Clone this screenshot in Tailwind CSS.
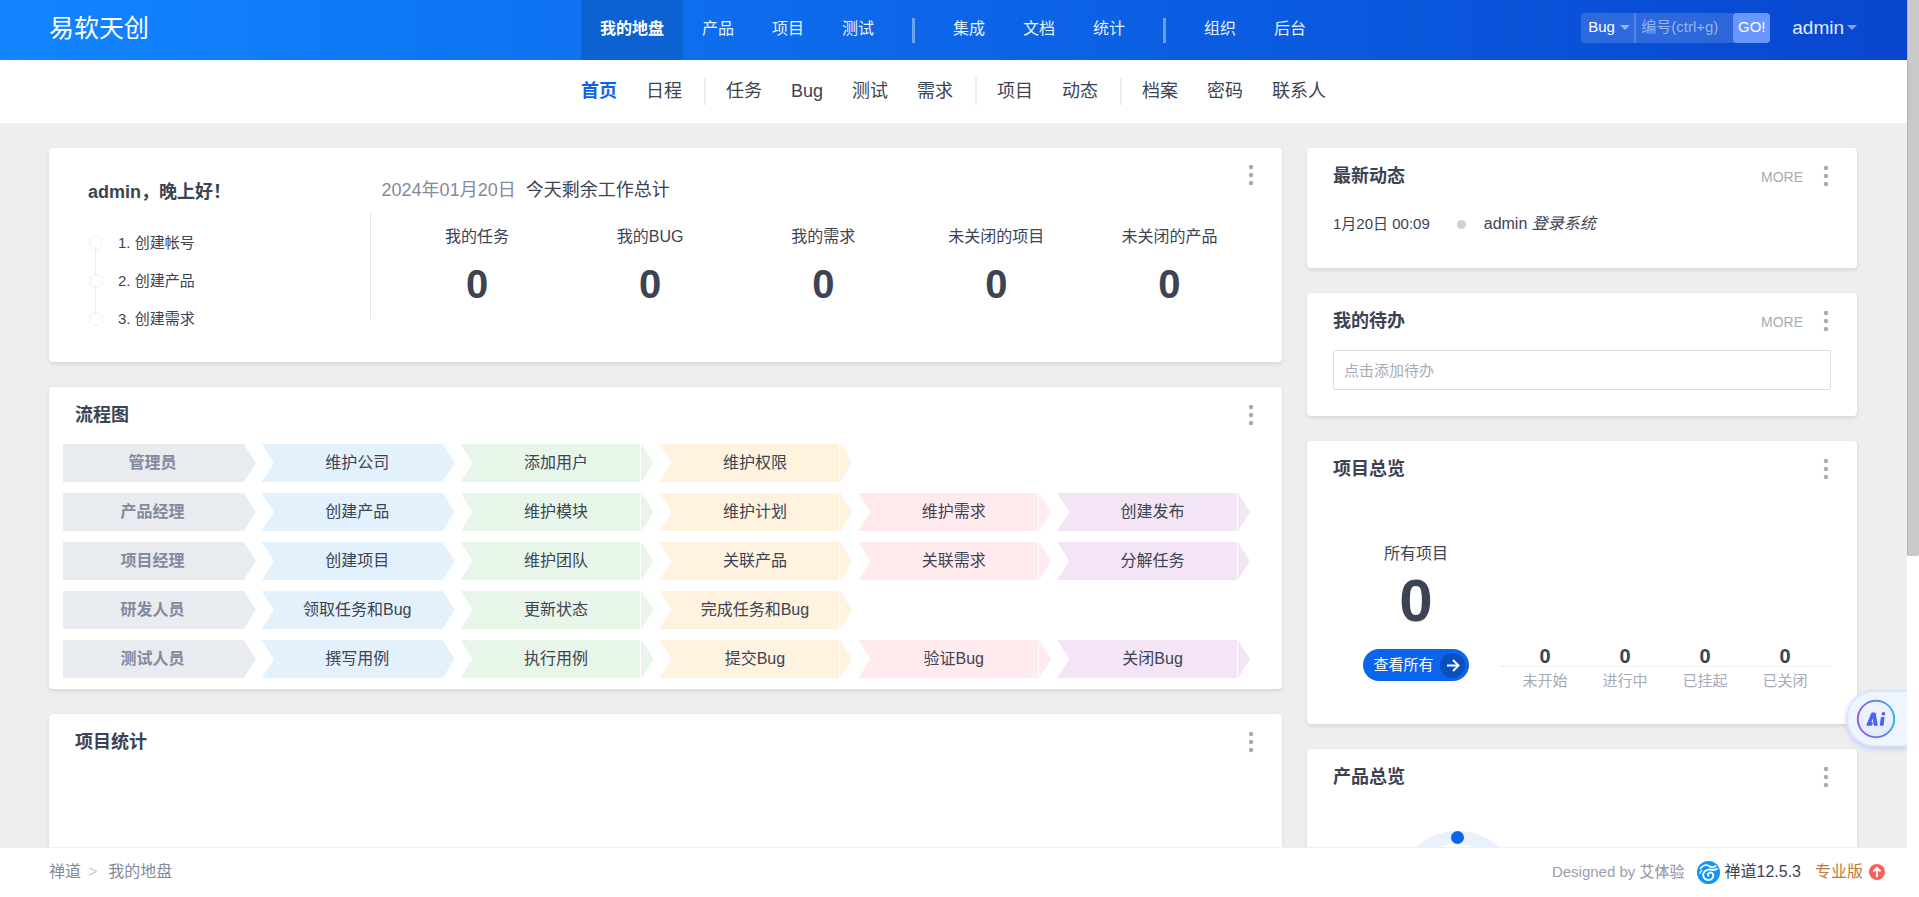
<!DOCTYPE html>
<html lang="zh-CN">
<head>
<meta charset="utf-8">
<meta name="viewport" content="width=device-width, initial-scale=1">
<title>我的地盘 - 禅道</title>
<script src="https://cdn.jsdelivr.net/npm/@tailwindcss/browser@4"></script>
</head>
<body class="flex h-screen overflow-hidden bg-white font-['Liberation_Sans','Noto_Sans_CJK_SC',sans-serif] text-base text-[#3c4353]">
<svg class="hidden">
  <symbol id="dots" viewBox="0 0 6 22"><g fill="#a6aab8"><circle cx="3" cy="3" r="2.2"/><circle cx="3" cy="11" r="2.2"/><circle cx="3" cy="19" r="2.2"/></g></symbol>
  <symbol id="caret" viewBox="0 0 10 5"><path d="M0 0h10L5 5z" fill="currentColor"/></symbol>
</svg>

<div class="relative flex min-w-0 flex-1 flex-col">
  <header class="grid h-[60px] shrink-0 grid-cols-[1fr_auto_1fr] items-center bg-linear-to-r from-[#1285ff] via-[#0d65e7] to-[#0946d0] pr-[50px] pl-[49px] text-white">
    <h1 class="pb-1 text-[25px] leading-8"><a href="#">易软天创</a></h1>
    <nav class="flex h-full items-center leading-[58px] text-[#e6f0fe]" aria-label="主导航">
      <a href="#" class="h-full bg-[#0d62d2] px-[19px] font-bold text-white">我的地盘</a>
      <a href="#" class="h-full px-[19px]">产品</a>
      <a href="#" class="h-full px-[19px]">项目</a>
      <a href="#" class="h-full px-[19px]">测试</a>
      <span class="mx-[19px] h-[25px] w-[3px] bg-white/40"></span>
      <a href="#" class="h-full px-[19px]">集成</a>
      <a href="#" class="h-full px-[19px]">文档</a>
      <a href="#" class="h-full px-[19px]">统计</a>
      <span class="mx-[19px] h-[25px] w-[3px] bg-white/40"></span>
      <a href="#" class="h-full px-[19px]">组织</a>
      <a href="#" class="h-full px-[19px]">后台</a>
    </nav>
    <div class="flex items-center justify-end gap-[22px] pb-[5px]">
      <form class="flex h-[30px] overflow-hidden rounded-[3px] text-[15px]">
        <label class="relative flex w-[53px] items-center bg-white/15">
          <select aria-label="搜索类型" class="h-full w-full appearance-none bg-transparent pl-[7px] text-white outline-none"><option>Bug</option></select>
          <svg class="absolute right-1 h-[5px] w-[10px] text-white/50"><use href="#caret"/></svg>
        </label>
        <span class="w-[2px] bg-white/30"></span>
        <input aria-label="编号" placeholder="编号(ctrl+g)" class="w-[97px] bg-white/15 pl-[5px] placeholder:text-white/50 outline-none">
        <button type="button" class="w-[37px] rounded-[3px] bg-[#6898ff] text-white">GO!</button>
      </form>
      <button type="button" class="flex items-center gap-[3px] text-[19px] leading-[30px] text-[#e0eafc]">admin<svg class="h-[5px] w-[10px] text-white/50"><use href="#caret"/></svg></button>
    </div>
  </header>

  <nav class="flex h-[63px] shrink-0 items-center justify-center gap-[29px] pb-[2px] text-lg" aria-label="二级导航">
    <a href="#" class="font-bold text-[#0c64eb]">首页</a>
    <a href="#">日程</a>
    <div class="flex items-center gap-[29px] border-l-2 border-[#eee] pl-5 -ml-[7px]">
      <a href="#">任务</a><a href="#">Bug</a><a href="#">测试</a><a href="#">需求</a>
    </div>
    <div class="flex items-center gap-[29px] border-l-2 border-[#eee] pl-5 -ml-[7px]">
      <a href="#">项目</a><a href="#">动态</a>
    </div>
    <div class="flex items-center gap-[29px] border-l-2 border-[#eee] pl-5 -ml-[7px]">
      <a href="#">档案</a><a href="#">密码</a><a href="#">联系人</a>
    </div>
  </nav>

  <main class="grid min-h-0 flex-1 grid-cols-[1233fr_550fr] items-start gap-[25px] overflow-hidden bg-[#eee] pt-[25px] pr-[50px] pl-[49px]">
    <div class="flex flex-col gap-[25px]">
      <section class="relative flex rounded bg-white shadow-[0_2px_4px_rgba(0,0,0,0.1)]">
        <div class="w-[26%] pt-8 pl-[39px]">
          <h2 class="text-lg leading-6 font-bold">admin，晚上好！</h2>
          <ol class="mt-[27px] flex flex-col gap-[14px] text-[15px] leading-6">
            <li class="relative flex items-center gap-[15px] pl-px before:size-[14px] before:rounded-full before:border before:border-[#eee] after:absolute after:top-4 after:left-[7px] after:h-[29px] after:w-px after:bg-[#eee]"><a href="#">1. 创建帐号</a></li>
            <li class="relative flex items-center gap-[15px] pl-px before:size-[14px] before:rounded-full before:border before:border-[#eee] after:absolute after:top-4 after:left-[7px] after:h-[29px] after:w-px after:bg-[#eee]"><a href="#">2. 创建产品</a></li>
            <li class="flex items-center gap-[15px] pl-px before:size-[14px] before:rounded-full before:border before:border-[#eee]"><a href="#">3. 创建需求</a></li>
          </ol>
        </div>
        <div class="min-w-0 flex-1 pt-[30px] pb-[43px]">
          <p class="flex gap-[10px] pl-3 text-lg leading-6"><time class="text-[#838a9d]">2024年01月20日</time><span>今天剩余工作总计</span></p>
          <dl class="mt-[10px] grid grid-cols-5 border-l border-[#e5e5ec] pt-[13px] pr-[26px] pb-3 pl-5 text-center">
            <div><dt class="leading-6">我的任务</dt><dd class="mt-3 text-[40px] leading-[46px] font-bold">0</dd></div>
            <div><dt class="leading-6">我的BUG</dt><dd class="mt-3 text-[40px] leading-[46px] font-bold">0</dd></div>
            <div><dt class="leading-6">我的需求</dt><dd class="mt-3 text-[40px] leading-[46px] font-bold">0</dd></div>
            <div><dt class="leading-6">未关闭的项目</dt><dd class="mt-3 text-[40px] leading-[46px] font-bold">0</dd></div>
            <div><dt class="leading-6">未关闭的产品</dt><dd class="mt-3 text-[40px] leading-[46px] font-bold">0</dd></div>
          </dl>
        </div>
        <button type="button" aria-label="更多" class="absolute top-4 right-7"><svg class="h-[22px] w-[6px]"><use href="#dots"/></svg></button>
      </section>

      <section class="rounded bg-white pb-[11px] shadow-[0_2px_4px_rgba(0,0,0,0.1)]">
        <div class="flex h-[57px] items-center justify-between pr-7 pb-[2px] pl-[26px]">
          <h2 class="text-lg leading-6 font-bold">流程图</h2>
          <button type="button" aria-label="更多"><svg class="h-[22px] w-[6px]"><use href="#dots"/></svg></button>
        </div>
        <div class="grid grid-cols-6 gap-x-[6px] gap-y-[11px] pr-8 pl-[14px] text-center leading-[38px]">
          <h3 class="bg-[#e8ebf0] pr-[14px] font-bold text-[#838a9d] [clip-path:polygon(0_0,calc(100%-12px)_0,100%_50%,calc(100%-12px)_100%,0_100%)]">管理员</h3>
          <a href="#" class="bg-[#e3f1fd] pr-[2px] [clip-path:polygon(0_0,calc(100%-12px)_0,100%_50%,calc(100%-12px)_100%,0_100%,12px_50%)]">维护公司</a>
          <a href="#" class="relative bg-[#e8f5e9] pr-[2px] [clip-path:polygon(0_0,calc(100%-12px)_0,100%_50%,calc(100%-12px)_100%,0_100%,12px_50%)] after:absolute after:top-0 after:right-3 after:h-full after:w-px after:bg-white">添加用户</a>
          <a href="#" class="relative bg-[#fff2df] pr-[2px] [clip-path:polygon(0_0,calc(100%-12px)_0,100%_50%,calc(100%-12px)_100%,0_100%,12px_50%)] after:absolute after:top-0 after:right-3 after:h-full after:w-px after:bg-white">维护权限</a>

          <h3 class="col-start-1 bg-[#e8ebf0] pr-[14px] font-bold text-[#838a9d] [clip-path:polygon(0_0,calc(100%-12px)_0,100%_50%,calc(100%-12px)_100%,0_100%)]">产品经理</h3>
          <a href="#" class="bg-[#e3f1fd] pr-[2px] [clip-path:polygon(0_0,calc(100%-12px)_0,100%_50%,calc(100%-12px)_100%,0_100%,12px_50%)]">创建产品</a>
          <a href="#" class="relative bg-[#e8f5e9] pr-[2px] [clip-path:polygon(0_0,calc(100%-12px)_0,100%_50%,calc(100%-12px)_100%,0_100%,12px_50%)] after:absolute after:top-0 after:right-3 after:h-full after:w-px after:bg-white">维护模块</a>
          <a href="#" class="relative bg-[#fff2df] pr-[2px] [clip-path:polygon(0_0,calc(100%-12px)_0,100%_50%,calc(100%-12px)_100%,0_100%,12px_50%)] after:absolute after:top-0 after:right-3 after:h-full after:w-px after:bg-white">维护计划</a>
          <a href="#" class="relative bg-[#ffebee] pr-[2px] [clip-path:polygon(0_0,calc(100%-12px)_0,100%_50%,calc(100%-12px)_100%,0_100%,12px_50%)] after:absolute after:top-0 after:right-3 after:h-full after:w-px after:bg-white">维护需求</a>
          <a href="#" class="relative bg-[#f3e5f5] pr-[2px] [clip-path:polygon(0_0,calc(100%-12px)_0,100%_50%,calc(100%-12px)_100%,0_100%,12px_50%)] after:absolute after:top-0 after:right-3 after:h-full after:w-px after:bg-white">创建发布</a>

          <h3 class="col-start-1 bg-[#e8ebf0] pr-[14px] font-bold text-[#838a9d] [clip-path:polygon(0_0,calc(100%-12px)_0,100%_50%,calc(100%-12px)_100%,0_100%)]">项目经理</h3>
          <a href="#" class="bg-[#e3f1fd] pr-[2px] [clip-path:polygon(0_0,calc(100%-12px)_0,100%_50%,calc(100%-12px)_100%,0_100%,12px_50%)]">创建项目</a>
          <a href="#" class="relative bg-[#e8f5e9] pr-[2px] [clip-path:polygon(0_0,calc(100%-12px)_0,100%_50%,calc(100%-12px)_100%,0_100%,12px_50%)] after:absolute after:top-0 after:right-3 after:h-full after:w-px after:bg-white">维护团队</a>
          <a href="#" class="relative bg-[#fff2df] pr-[2px] [clip-path:polygon(0_0,calc(100%-12px)_0,100%_50%,calc(100%-12px)_100%,0_100%,12px_50%)] after:absolute after:top-0 after:right-3 after:h-full after:w-px after:bg-white">关联产品</a>
          <a href="#" class="relative bg-[#ffebee] pr-[2px] [clip-path:polygon(0_0,calc(100%-12px)_0,100%_50%,calc(100%-12px)_100%,0_100%,12px_50%)] after:absolute after:top-0 after:right-3 after:h-full after:w-px after:bg-white">关联需求</a>
          <a href="#" class="relative bg-[#f3e5f5] pr-[2px] [clip-path:polygon(0_0,calc(100%-12px)_0,100%_50%,calc(100%-12px)_100%,0_100%,12px_50%)] after:absolute after:top-0 after:right-3 after:h-full after:w-px after:bg-white">分解任务</a>

          <h3 class="col-start-1 bg-[#e8ebf0] pr-[14px] font-bold text-[#838a9d] [clip-path:polygon(0_0,calc(100%-12px)_0,100%_50%,calc(100%-12px)_100%,0_100%)]">研发人员</h3>
          <a href="#" class="bg-[#e3f1fd] pr-[2px] [clip-path:polygon(0_0,calc(100%-12px)_0,100%_50%,calc(100%-12px)_100%,0_100%,12px_50%)]">领取任务和Bug</a>
          <a href="#" class="relative bg-[#e8f5e9] pr-[2px] [clip-path:polygon(0_0,calc(100%-12px)_0,100%_50%,calc(100%-12px)_100%,0_100%,12px_50%)] after:absolute after:top-0 after:right-3 after:h-full after:w-px after:bg-white">更新状态</a>
          <a href="#" class="relative bg-[#fff2df] pr-[2px] [clip-path:polygon(0_0,calc(100%-12px)_0,100%_50%,calc(100%-12px)_100%,0_100%,12px_50%)] after:absolute after:top-0 after:right-3 after:h-full after:w-px after:bg-white">完成任务和Bug</a>

          <h3 class="col-start-1 bg-[#e8ebf0] pr-[14px] font-bold text-[#838a9d] [clip-path:polygon(0_0,calc(100%-12px)_0,100%_50%,calc(100%-12px)_100%,0_100%)]">测试人员</h3>
          <a href="#" class="bg-[#e3f1fd] pr-[2px] [clip-path:polygon(0_0,calc(100%-12px)_0,100%_50%,calc(100%-12px)_100%,0_100%,12px_50%)]">撰写用例</a>
          <a href="#" class="relative bg-[#e8f5e9] pr-[2px] [clip-path:polygon(0_0,calc(100%-12px)_0,100%_50%,calc(100%-12px)_100%,0_100%,12px_50%)] after:absolute after:top-0 after:right-3 after:h-full after:w-px after:bg-white">执行用例</a>
          <a href="#" class="relative bg-[#fff2df] pr-[2px] [clip-path:polygon(0_0,calc(100%-12px)_0,100%_50%,calc(100%-12px)_100%,0_100%,12px_50%)] after:absolute after:top-0 after:right-3 after:h-full after:w-px after:bg-white">提交Bug</a>
          <a href="#" class="relative bg-[#ffebee] pr-[2px] [clip-path:polygon(0_0,calc(100%-12px)_0,100%_50%,calc(100%-12px)_100%,0_100%,12px_50%)] after:absolute after:top-0 after:right-3 after:h-full after:w-px after:bg-white">验证Bug</a>
          <a href="#" class="relative bg-[#f3e5f5] pr-[2px] [clip-path:polygon(0_0,calc(100%-12px)_0,100%_50%,calc(100%-12px)_100%,0_100%,12px_50%)] after:absolute after:top-0 after:right-3 after:h-full after:w-px after:bg-white">关闭Bug</a>
        </div>
      </section>

      <section class="rounded bg-white pb-60 shadow-[0_2px_4px_rgba(0,0,0,0.1)]">
        <div class="flex h-[57px] items-center justify-between pr-7 pb-[2px] pl-[26px]">
          <h2 class="text-lg leading-6 font-bold">项目统计</h2>
          <button type="button" aria-label="更多"><svg class="h-[22px] w-[6px]"><use href="#dots"/></svg></button>
        </div>
      </section>
    </div>

    <div class="flex flex-col gap-[25px]">
      <section class="rounded bg-white pb-8 shadow-[0_2px_4px_rgba(0,0,0,0.1)]">
        <div class="flex h-[57px] items-center pr-7 pb-[2px] pl-[26px]">
          <h2 class="flex-1 text-lg leading-6 font-bold">最新动态</h2>
          <a href="#" class="mr-5 pt-[2px] text-sm text-[#a6aab8]">MORE</a>
          <button type="button" aria-label="更多"><svg class="h-[22px] w-[6px]"><use href="#dots"/></svg></button>
        </div>
        <p class="flex items-center pt-[7px] pl-[26px] leading-6">
          <time class="text-[15px]">1月20日 00:09</time>
          <span class="mr-[18px] ml-[27px] size-[9px] rounded-full bg-[#cbd0db]"></span>
          <span>admin <em>登录系统</em></span>
        </p>
      </section>

      <section class="rounded bg-white pb-[26px] shadow-[0_2px_4px_rgba(0,0,0,0.1)]">
        <div class="flex h-[57px] items-center pr-7 pb-[2px] pl-[26px]">
          <h2 class="flex-1 text-lg leading-6 font-bold">我的待办</h2>
          <a href="#" class="mr-5 pt-[2px] text-sm text-[#a6aab8]">MORE</a>
          <button type="button" aria-label="更多"><svg class="h-[22px] w-[6px]"><use href="#dots"/></svg></button>
        </div>
        <div class="px-[26px]">
          <input aria-label="添加待办" placeholder="点击添加待办" class="block h-10 w-full rounded-[2px] border border-[#dcdcdc] px-[10px] text-[15px] placeholder:text-[#a6aab8] outline-none">
        </div>
      </section>

      <section class="rounded bg-white pb-[31px] shadow-[0_2px_4px_rgba(0,0,0,0.1)]">
        <div class="flex h-[57px] items-center justify-between pr-7 pb-[2px] pl-[26px]">
          <h2 class="text-lg leading-6 font-bold">项目总览</h2>
          <button type="button" aria-label="更多"><svg class="h-[22px] w-[6px]"><use href="#dots"/></svg></button>
        </div>
        <div class="flex items-end px-[26px] pt-11">
          <div class="flex w-1/3 flex-col items-center pb-3">
            <p class="leading-6">所有项目</p>
            <p class="mt-[5px] text-[60px] leading-[60px] font-bold">0</p>
            <a href="#" class="mt-[18px] flex h-8 items-center gap-[6px] rounded-full bg-[#0c64eb] pr-1 pl-[10px] text-[15px] whitespace-nowrap text-white">查看所有
              <svg class="size-[25px]" viewBox="0 0 25 25"><circle cx="12.500" cy="12.500" r="12.500" fill="#0a50bc"/><path d="M7 12.500h11M13 7l5.500 5.500L13 18" fill="none" stroke="#fff" stroke-width="2"/></svg>
            </a>
          </div>
          <dl class="grid flex-1 grid-cols-4 px-[6px] text-center">
            <dd class="col-span-4 -mx-[6px] row-start-2 h-px bg-[#eee]"></dd>
            <dd class="text-xl leading-5 font-bold">0</dd><dd class="text-xl leading-5 font-bold">0</dd><dd class="text-xl leading-5 font-bold">0</dd><dd class="text-xl leading-5 font-bold">0</dd>
            <dt class="pt-[2px] text-[15px] leading-6 text-[#a6aab8]">未开始</dt><dt class="pt-[2px] text-[15px] leading-6 text-[#a6aab8]">进行中</dt><dt class="pt-[2px] text-[15px] leading-6 text-[#a6aab8]">已挂起</dt><dt class="pt-[2px] text-[15px] leading-6 text-[#a6aab8]">已关闭</dt>
          </dl>
        </div>
      </section>

      <section class="rounded bg-white pb-10 shadow-[0_2px_4px_rgba(0,0,0,0.1)]">
        <div class="flex h-[57px] items-center justify-between pr-7 pb-[2px] pl-[26px]">
          <h2 class="text-lg leading-6 font-bold">产品总览</h2>
          <button type="button" aria-label="更多"><svg class="h-[22px] w-[6px]"><use href="#dots"/></svg></button>
        </div>
        <svg class="mt-[25px] ml-[88px] size-[125px]" viewBox="0 0 125 125"><circle cx="62.500" cy="62.500" r="56" fill="none" stroke="#e8f1fc" stroke-width="13"/><circle cx="62.500" cy="6.500" r="6.500" fill="#0c64eb"/></svg>
      </section>
    </div>
  </main>

  <footer class="flex h-[50px] shrink-0 items-center justify-between border-t border-[#eee] pr-[22px] pb-px pl-[49px]">
    <nav class="flex items-center text-[#838a9d]" aria-label="面包屑"><a href="#">禅道</a><span class="mr-[11px] ml-[7px] text-[#c4c7d0]">&gt;</span><a href="#">我的地盘</a></nav>
    <div class="flex items-center">
      <p class="text-[15px] text-[#9b9eac]">Designed by <a href="#" class="font-medium">艾体验</a></p>
      <a href="#" class="ml-[13px] flex items-center gap-1">
        <svg class="size-[23px]" viewBox="0 0 23 23"><circle cx="11.500" cy="11.500" r="11.500" fill="#0f95fb"/><g fill="none" stroke="#fff" stroke-linecap="round"><path d="M3.500 7.200C6 4 9.500 3.300 12 5c2.500 1.600 5 1.300 6.500 0" stroke-width="1.800"/><path d="M20 7.800c-2.800 2.400-5.500.4-8.500.8-4.200.5-6.300 4-5 7.400 1.500 3.400 6.300 4 8.800 1.300 2.200-2.600.8-5.800-1.800-5.800-2.100 0-3.200 1.900-2.200 3.300" stroke-width="1.900"/><path d="M3 12.500c.2-1.500.8-2.500 1.800-3.300" stroke-width="1.200"/></g></svg>
        禅道12.5.3</a>
      <a href="#" class="ml-[14px] flex items-center gap-[6px] text-[#c07a35]">专业版
        <svg class="size-4" viewBox="0 0 16 16"><circle cx="8" cy="8" r="8" fill="#ff5d5d"/><path d="M8 13V4M4.500 7.500L8 4l3.500 3.500" fill="none" stroke="#fff" stroke-width="2"/></svg>
      </a>
    </div>
  </footer>

  <button type="button" aria-label="AI 助手" class="absolute right-0 bottom-[150px] flex h-[57px] w-[61px] items-center rounded-l-full border-2 border-r-0 border-[#d8e7fc] bg-[#eef5fe] pl-[8px] shadow-[0_2px_5px_rgba(120,140,240,0.35)]">
    <svg class="size-10" viewBox="0 0 40 40">
      <defs>
        <linearGradient id="ring" x1="0" y1=".6" x2="1" y2=".4"><stop offset="0" stop-color="#8a63f2"/><stop offset=".5" stop-color="#6a78ee"/><stop offset="1" stop-color="#2fb8f2"/></linearGradient>
        <linearGradient id="disc" x1="0" y1="0" x2="0" y2="1"><stop offset="0" stop-color="#f3f5fd"/><stop offset="1" stop-color="#e4e8fb"/></linearGradient>
      </defs>
      <circle cx="20" cy="20" r="18.200" fill="url(#disc)" stroke="url(#ring)" stroke-width="2"/>
      <g fill="#4a63ee" stroke="#4a63ee" stroke-linejoin="round">
        <path d="M10.800 26.200l5-12.200h3.400l2 12.200h-3l-1.100-8.400-2.600 5.700h1.800l-.5 2.700z"/>
        <path d="M25.300 18.500h2.800l-1 7.700h-2.700z"/>
        <circle cx="27.400" cy="14.800" r="1.400"/>
      </g>
    </svg>
  </button>
</div>

<div class="relative z-10 w-3 shrink-0 bg-white" aria-hidden="true"><div class="h-[62%] rounded-b-[2px] border-l border-[#b5b5b5] bg-[#c9c9c9]"></div></div>
</body>
</html>
